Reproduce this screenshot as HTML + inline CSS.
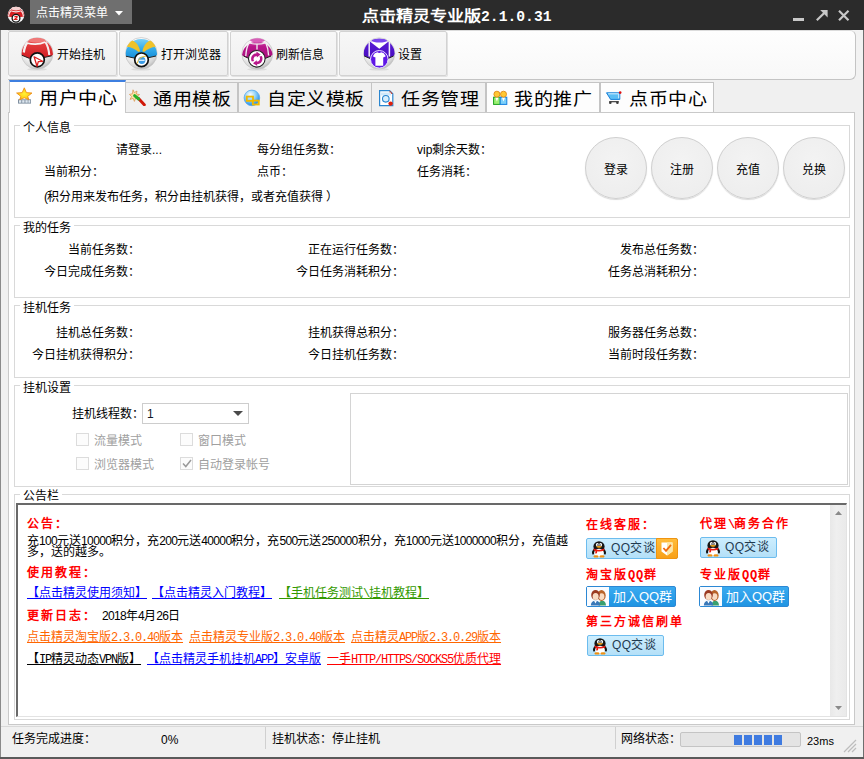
<!DOCTYPE html>
<html lang="zh-CN">
<head>
<meta charset="utf-8">
<style>
*{margin:0;padding:0;box-sizing:border-box;}
html,body{width:864px;height:759px;overflow:hidden;background:#f0f0f0;}
body{position:relative;font-family:"Liberation Sans",sans-serif;font-size:12px;color:#000;}
.a{position:absolute;white-space:nowrap;line-height:14px;}
.box{position:absolute;}
#titlebar{left:0;top:0;width:864px;height:30px;background:#2b2b2b;}
.tbtn{position:absolute;top:31px;height:45px;border:1px solid #d2d2d2;border-radius:2px;background:linear-gradient(#f7f7f7,#efefef);box-shadow:1px 1px 0 #e2e2e2;}
.tab{position:absolute;top:82px;height:30px;border:1px solid #c4c4c4;border-bottom:none;background:#f0f0f0;}
.tabt{position:absolute;font-size:19px;line-height:20px;letter-spacing:0.6px;transform:scaleY(0.92);transform-origin:0 50%;white-space:nowrap;color:#000;}
.grp{position:absolute;border:1px solid #d9d9d9;}
.gt{position:absolute;background:#fff;padding:0 3px;line-height:14px;white-space:nowrap;}
.r{text-align:right;}
.rb{position:absolute;width:62px;height:62px;border-radius:50%;border:1px solid #cfcfcf;background:radial-gradient(circle at 50% 40%,#f3f3f3,#ececec);box-shadow:0 1px 1px #d8d8d8;}
.red{color:#ff0000;font-weight:bold;}
.lnk{text-decoration:underline;}
.cb{position:absolute;width:13px;height:13px;border:1px solid #dcdcdc;background:#fcfcfc;}

.n{position:absolute;white-space:nowrap;font-size:12px;line-height:13px;}
.n s1{text-decoration:inherit;font-family:"Liberation Sans",sans-serif;font-size:12px;letter-spacing:-0.65px;}
.n m{font-family:"Liberation Mono",monospace;font-size:12px;letter-spacing:-1.2px;}
.sp{letter-spacing:2px;}
.n q{font-family:"Liberation Mono",monospace;font-size:12px;letter-spacing:0.8px;}
.n q::before,.n q::after{content:none;}
</style>
</head>
<body>
<!-- window borders -->
<div class="box" style="left:0;top:30px;width:1px;height:729px;background:#8a8a8a"></div>
<div class="box" style="left:863px;top:30px;width:1px;height:729px;background:#6e6e6e"></div>
<div class="box" style="left:0;top:757px;width:864px;height:2px;background:#5a5a5a"></div>

<!-- title bar -->
<div id="titlebar" class="box"></div>
<svg class="box" style="left:7px;top:6px" width="18" height="18" viewBox="0 0 18 18">
  <circle cx="9" cy="9" r="8.3" fill="#f6f6f6"/>
  <path d="M0.7 10.2 A8.3 8.3 0 0 1 17.3 10.2 L14 11 L9 10.6 L4 11 Z" fill="#d91e22"/>
  <ellipse cx="9" cy="2.6" rx="4.6" ry="1.9" fill="#f6d0d0"/>
  <path d="M3.6 4.8 Q9 6.8 14.4 4.8" stroke="#f4e8e8" stroke-width="1.2" fill="none"/>
  <path d="M3.6 4.8 Q1.8 7.5 1.6 10" stroke="#f4e8e8" stroke-width="1.2" fill="none"/>
  <path d="M14.4 4.8 Q16.2 7.5 16.4 10" stroke="#f4e8e8" stroke-width="1.2" fill="none"/>
  <circle cx="9" cy="12.2" r="3.9" fill="#fff" stroke="#111" stroke-width="1.3"/>
  <path d="M7.4 10.9 Q9.2 10 10.4 10.9 L7.6 13.4 H10.6" stroke="#e01818" stroke-width="1.2" fill="none"/>
</svg>
<div class="box" style="left:30px;top:0;width:102px;height:24px;background:#6f6f6f"></div>
<div class="a" style="left:36px;top:6px;color:#fff;font-size:12px">点击精灵菜单</div>
<svg class="box" style="left:115px;top:11px" width="8" height="5"><path d="M0 0 H8 L4 4.5Z" fill="#fff"/></svg>
<div class="a" style="left:362px;top:8px;color:#fff;font-size:17px;font-weight:bold;line-height:16px"><span style="display:inline-block;transform:scaleY(0.88);transform-origin:50% 60%">点击精灵专业版</span><span style="font-family:'Liberation Mono',monospace;font-size:14.7px">2.1.0.31</span></div>
<div class="box" style="left:793px;top:18px;width:10.5px;height:2.5px;background:#c8c8c8"></div>
<svg class="box" style="left:815px;top:9px" width="14" height="13" viewBox="0 0 14 13"><path d="M1.8 11.2 L9.5 3.8" stroke="#c8c8c8" stroke-width="2.2"/><path d="M5.2 1 H12.6 V8.4 Z" fill="#c8c8c8"/></svg>
<svg class="box" style="left:838px;top:10px" width="12" height="11" viewBox="0 0 12 11"><path d="M1 0.8 L10.5 10.2 M10.5 0.8 L1 10.2" stroke="#c8c8c8" stroke-width="2.2"/></svg>

<!-- toolbar -->
<div class="box" style="left:1px;top:30px;width:862px;height:50px;background:#f2f2f2"></div>
<div class="box" style="left:8px;top:30px;width:848px;height:50px;border:1px solid #c4c4c4;border-left:none;border-top-color:#dcdcdc;border-radius:0 6px 6px 0;background:linear-gradient(#fefefe,#f8f8f8)"></div>
<div class="tbtn" style="left:8px;width:109px"></div>
<div class="tbtn" style="left:119px;width:109px"></div>
<div class="tbtn" style="left:230px;width:107px"></div>
<div class="tbtn" style="left:339px;width:108px"></div>

<svg class="box" style="left:19px;top:35px" width="36" height="37" viewBox="0 0 36 37">
 <defs>
  <radialGradient id="wb" cx="40%" cy="30%" r="75%"><stop offset="0" stop-color="#ffffff"/><stop offset="0.55" stop-color="#f4f4f4"/><stop offset="0.85" stop-color="#d4d4d4"/><stop offset="1" stop-color="#b0b0b0"/></radialGradient>
  <linearGradient id="rd" x1="0" y1="0" x2="0" y2="1"><stop offset="0" stop-color="#e84848"/><stop offset="1" stop-color="#d21c22"/></linearGradient>
 </defs>
 <ellipse cx="18" cy="34.3" rx="10" ry="1.3" fill="#cfcfcf" opacity="0.6"/>
 <circle cx="18.2" cy="18.4" r="15.8" fill="url(#wb)" stroke="#c4c4c4" stroke-width="0.7"/>
 <clipPath id="clipb0"><circle cx="18.2" cy="18.4" r="15.8"/></clipPath>
 <g clip-path="url(#clipb0)">
 <path d="M2.4 19.5 A15.8 15.8 0 0 1 34 19.8 L32.7 20.8 L25.2 22.5 L18 23 L10.5 23.4 L2.7 20.2 Z" fill="url(#rd)"/>
 <ellipse cx="18" cy="5.2" rx="8.7" ry="2.5" fill="#f07a7a"/>
 <path d="M7.8 8 Q18 10.8 26.4 7" stroke="#f8f4f4" stroke-width="1.8" fill="none"/>
 <path d="M8.3 7.8 Q5.6 11 4.8 17.5" stroke="#f6f2f2" stroke-width="2.3" fill="none"/>
 <path d="M26.4 7 Q29.6 12 30.3 20" stroke="#f4ecec" stroke-width="2.1" fill="none"/>
 <path d="M2.7 20.2 L10.5 23.4 M25.2 22.5 L32.7 20.8" stroke="#222" stroke-width="1"/>
 </g>
 <circle cx="18.3" cy="24.8" r="7" fill="#fff" stroke="#111" stroke-width="1.7"/>
 <path d="M15.1 21.8 L23.6 26.3 L19.3 26.6 L18 31.3 Z" fill="none" stroke="#dd2020" stroke-width="1.3" stroke-linejoin="round"/>
</svg>
<svg class="box" style="left:123px;top:35px" width="36" height="37" viewBox="0 0 36 37">
 <defs>
  <linearGradient id="bl" x1="0" y1="0" x2="0" y2="1"><stop offset="0" stop-color="#7cd0f6"/><stop offset="0.45" stop-color="#3ab0ee"/><stop offset="1" stop-color="#168ed8"/></linearGradient>
 </defs>
 <ellipse cx="18" cy="34.3" rx="10" ry="1.3" fill="#cfcfcf" opacity="0.6"/>
 <circle cx="18.3" cy="18.3" r="15.8" fill="url(#wb)" stroke="#c4c4c4" stroke-width="0.7"/>
 <clipPath id="clipb1"><circle cx="18.3" cy="18.3" r="15.8"/></clipPath>
 <g clip-path="url(#clipb1)">
 <path d="M2.5 20 A15.8 15.8 0 0 1 34.1 19.5 L33 21 L25 22.8 L18 23 L11 23 L2.8 21.2 Z" fill="url(#bl)"/>
 <path d="M5.7 6.4 Q8 5.4 10.6 6 Q15.8 9 17.2 16.3 L15.6 17 Q10.5 12.5 3.8 11.8 Q4.3 8.5 5.7 6.4 Z" fill="#efc22a"/>
 <path d="M30.9 6.4 Q28.6 5.4 26 6 Q20.8 9 19.4 16.3 L21 17 Q26.1 12.5 32.8 11.8 Q32.3 8.5 30.9 6.4 Z" fill="#efc22a"/>
 <path d="M2.8 21.2 L11 23 M25 22.8 L33 21" stroke="#222" stroke-width="1"/>
 </g>
 <circle cx="18.5" cy="24.8" r="6.8" fill="#fff" stroke="#111" stroke-width="1.7"/>
 <circle cx="18.8" cy="25.3" r="3.6" fill="#3c9ce6"/>
 <rect x="16" y="24.7" width="5.6" height="1.1" fill="#fff"/>
 <path d="M14.2 28.5 Q15.5 21.5 22.8 21.2" stroke="#f0c030" stroke-width="1" fill="none"/>
</svg>
<svg class="box" style="left:239px;top:35px" width="36" height="37" viewBox="0 0 36 37">
 <defs>
  <linearGradient id="mg" x1="0" y1="0" x2="0" y2="1"><stop offset="0" stop-color="#d04aa8"/><stop offset="0.3" stop-color="#b8168a"/><stop offset="1" stop-color="#a80f7c"/></linearGradient>
 </defs>
 <ellipse cx="18" cy="34.3" rx="10" ry="1.3" fill="#cfcfcf" opacity="0.6"/>
 <circle cx="18.3" cy="18.7" r="15.5" fill="url(#wb)" stroke="#c4c4c4" stroke-width="0.7"/>
 <clipPath id="clipb2"><circle cx="18.3" cy="18.7" r="15.5"/></clipPath>
 <g clip-path="url(#clipb2)">
 <path d="M3 20.2 A15.5 15.5 0 0 1 33.7 19.6 L32 21 L26 23.5 L18 23 L10 23.5 L4.5 21 Z" fill="url(#mg)"/>
 <ellipse cx="18.5" cy="5" rx="7.5" ry="2.6" fill="#d860b8"/>
 <path d="M10 8 Q18 10.3 26.8 7.8" stroke="#ece4ea" stroke-width="1.3" fill="none"/>
 <path d="M18 8.8 V14.5" stroke="#ece4ea" stroke-width="1.4"/>
 <path d="M10 8 Q7.2 13 6.8 21" stroke="#f2eaf0" stroke-width="1.4" fill="none"/>
 <path d="M26.8 7.8 Q29.2 13 29.6 20.5" stroke="#f2eaf0" stroke-width="1.4" fill="none"/>
 <path d="M4.5 21 L10 23.5 M26 23.5 L32 21" stroke="#222" stroke-width="1"/>
 </g>
 <circle cx="17.8" cy="23.8" r="8.3" fill="#fff" stroke="#222" stroke-width="1.1"/>
 <path d="M12.8 26.6 A5.6 5.6 0 0 1 17.6 18.3 L17.3 16.6 L21.6 19.4 L17.8 22.4 L17.8 20.9 A3.2 3.2 0 0 0 15.2 26 Z" fill="#b8168a"/>
 <path d="M22.8 21 A5.6 5.6 0 0 1 18 29.3 L18.3 31 L14 28.2 L17.8 25.2 L17.8 26.7 A3.2 3.2 0 0 0 20.4 21.6 Z" fill="#b8168a"/>
</svg>
<svg class="box" style="left:361px;top:35px" width="36" height="37" viewBox="0 0 36 37">
 <defs>
  <linearGradient id="pp" x1="0" y1="0" x2="0" y2="1"><stop offset="0" stop-color="#5a1ed8"/><stop offset="1" stop-color="#4a0cc0"/></linearGradient>
 </defs>
 <ellipse cx="18" cy="34.3" rx="10" ry="1.3" fill="#cfcfcf" opacity="0.6"/>
 <circle cx="18.2" cy="18.4" r="15.6" fill="url(#wb)" stroke="#c4c4c4" stroke-width="0.7"/>
 <clipPath id="clipb3"><circle cx="18.2" cy="18.4" r="15.6"/></clipPath>
 <g clip-path="url(#clipb3)">
 <path d="M2.6 19.6 A15.6 15.6 0 0 1 33.8 19 L32.5 21 L27 23.5 L18 23 L9 23.5 L3.2 21 Z" fill="url(#pp)"/>
 <path d="M8.6 6.3 L27.8 6.3 L18.3 13.8 Z" fill="#ffffff"/>
 <ellipse cx="18.4" cy="5.6" rx="7.4" ry="1.9" fill="#7a44ee"/>
 <path d="M8.2 6.5 L8.2 21.5 M28.4 6.5 L28.4 21.5" stroke="#f4f0fa" stroke-width="1.5"/>
 <path d="M3.2 21 L9 23.5 M27 23.5 L32.5 21" stroke="#222" stroke-width="1"/>
 </g>
 <circle cx="18.3" cy="24.3" r="8.8" fill="#5f16e6" stroke="#e8e0ff" stroke-width="1"/>
 <path d="M13.8 18.3 L16.4 17.3 Q18.3 18.8 20.2 17.3 L22.8 18.3 L24.8 21.3 L22.4 22.5 L22.2 21.8 L22.2 30.8 L14.4 30.8 L14.4 21.8 L14.2 22.5 L11.8 21.3 Z" fill="#fff"/>
</svg>
<div class="a" style="left:57px;top:48px">开始挂机</div>
<div class="a" style="left:161px;top:48px">打开浏览器</div>
<div class="a" style="left:276px;top:48px">刷新信息</div>
<div class="a" style="left:398px;top:48px">设置</div>

<!-- tabs -->
<div class="box" style="left:8px;top:112px;width:847px;height:613px;border:1px solid #c9c9c9;background:#fff"></div>
<div class="tab" style="left:125px;width:113px"></div>
<div class="tab" style="left:238px;width:134px"></div>
<div class="tab" style="left:371px;width:115px"></div>
<div class="tab" style="left:486px;width:114px;background:#fdfdfd"></div>
<div class="tab" style="left:600px;width:114px;background:#fdfdfd"></div>
<div class="box" style="left:9px;top:80px;width:117px;height:33px;background:#fff;border-left:1px solid #c9c9c9;border-right:1px solid #c9c9c9;border-top:2px solid #3d7fe0"></div>

<svg class="box" style="left:16px;top:87px" width="17" height="17" viewBox="0 0 17 17">
 <defs><radialGradient id="st" cx="50%" cy="50%" r="55%"><stop offset="0" stop-color="#fff23a"/><stop offset="0.6" stop-color="#ffd21a"/><stop offset="1" stop-color="#f08a10"/></radialGradient></defs>
 <rect x="2" y="12.3" width="13" height="4.3" fill="#7f8fa0"/>
 <rect x="3" y="13.2" width="2.3" height="2.5" fill="#dfe8f0"/><rect x="6.2" y="13.2" width="2.3" height="2.5" fill="#dfe8f0"/><rect x="9.4" y="13.2" width="2.3" height="2.5" fill="#dfe8f0"/><rect x="12.4" y="13.2" width="1.8" height="2.5" fill="#dfe8f0"/>
 <path d="M8.3 0.8 L10.4 5.6 L16 6 L11.7 9.4 L13 12.8 L8.3 10.8 L3.6 12.8 L4.9 9.4 L0.6 6 L6.2 5.6 Z" fill="url(#st)" stroke="#ec8a12" stroke-width="0.8" stroke-linejoin="round"/>
</svg>
<svg class="box" style="left:129px;top:89px" width="17" height="17" viewBox="0 0 17 17">
 <path d="M4 0.8 L5.3 3.6 L8 2 L7.4 5 L10.6 5.6 L8 7.4 L9.6 10 L6.6 9.2 L5.4 12.4 L4.2 9.4 L1 10.4 L2.6 7.6 L0.4 5.4 L3.4 4.8 Z" fill="#fbe3a8" stroke="#d9904a" stroke-width="0.7"/>
 <path d="M9.3 9.3 L15.3 15.8" stroke="#d01808" stroke-width="3" stroke-linecap="round"/>
 <path d="M5.6 6.6 L9.6 10" stroke="#28b028" stroke-width="3" stroke-linecap="round"/>
</svg>
<svg class="box" style="left:243px;top:89px" width="18" height="18" viewBox="0 0 18 18">
 <defs><radialGradient id="gl" cx="40%" cy="30%" r="70%"><stop offset="0" stop-color="#ffffff"/><stop offset="0.5" stop-color="#8fd0f8"/><stop offset="1" stop-color="#1f8ae6"/></radialGradient></defs>
 <circle cx="8.9" cy="8.9" r="7.8" fill="url(#gl)" stroke="#5aa8ee" stroke-width="0.8"/>
 <rect x="3.8" y="7.6" width="6.2" height="4.3" fill="none" stroke="#f0b800" stroke-width="1.8"/>
 <rect x="9.8" y="11.6" width="6" height="3.9" fill="none" stroke="#f0b800" stroke-width="1.8"/>
</svg>
<svg class="box" style="left:378px;top:89px" width="17" height="18" viewBox="0 0 17 18">
 <path d="M1.6 1.6 H11.6 L14.8 4.8 V16.6 H1.6 Z" fill="#fff" stroke="#2a86d0" stroke-width="1.2"/>
 <path d="M11.6 1.6 L14.8 4.8 H11.6 Z" fill="#e03010"/>
 <rect x="3" y="3.5" width="10" height="3" fill="#cfe8fa"/>
 <circle cx="7.8" cy="9.8" r="3.3" fill="#d8eefc" stroke="#2a86d0" stroke-width="1.1"/>
 <circle cx="12.6" cy="14.6" r="2.2" fill="#e0200c"/>
</svg>
<svg class="box" style="left:491px;top:89px" width="18" height="17" viewBox="0 0 18 17">
 <rect x="2.6" y="8.2" width="6.6" height="7.2" fill="#9af070" stroke="#1aa01a" stroke-width="1"/>
 <rect x="9.2" y="8.2" width="6.6" height="7.2" fill="#7cd0fa" stroke="#1480e0" stroke-width="1"/>
 <path d="M4.3 8.4 L5.9 12.6 L7.5 8.4 Z M10.9 8.4 L12.5 12.6 L14.1 8.4 Z" fill="#fff"/>
 <circle cx="5.9" cy="5.2" r="3" fill="#ffc833" stroke="#e08a18" stroke-width="0.9"/>
 <circle cx="12.5" cy="5.2" r="3" fill="#ffc833" stroke="#e08a18" stroke-width="0.9"/>
</svg>
<svg class="box" style="left:605px;top:91px" width="17" height="14" viewBox="0 0 17 14">
 <path d="M1.5 1.8 H14.8 V8.4 H5.6 Z" fill="#5cbef4" stroke="#1a80d8" stroke-width="1"/>
 <path d="M3.2 2.8 H13.7 V7.3" fill="none" stroke="#e6f6ff" stroke-width="0.9"/>
 <rect x="4.2" y="10" width="9.6" height="1.3" fill="#4a4a4a"/>
 <circle cx="5.3" cy="11.8" r="1.3" fill="#3a3a3a"/><circle cx="12.4" cy="11.8" r="1.3" fill="#3a3a3a"/>
 <circle cx="15.2" cy="1.6" r="1.3" fill="#e01010"/>
</svg>

<div class="tabt" style="left:39px;top:88px">用户中心</div>
<div class="tabt" style="left:153px;top:89px">通用模板</div>
<div class="tabt" style="left:267px;top:89px">自定义模板</div>
<div class="tabt" style="left:401px;top:89px">任务管理</div>
<div class="tabt" style="left:514px;top:89px">我的推广</div>
<div class="tabt" style="left:629px;top:89px">点币中心</div>


<!-- G1 personal info -->
<div class="grp" style="left:14px;top:125px;width:836px;height:93px"></div>
<div class="gt" style="left:20px;top:121px">个人信息</div>
<div class="a" style="left:116px;top:143px">请登录...</div>
<div class="a" style="left:257px;top:143px">每分组任务数：</div>
<div class="a" style="left:417px;top:143px">vip剩余天数：</div>
<div class="a" style="left:44px;top:165px">当前积分：</div>
<div class="a" style="left:257px;top:165px">点币：</div>
<div class="a" style="left:417px;top:165px">任务消耗：</div>
<div class="a" style="left:44px;top:189.5px">(<span style="margin-left:-1px">积分用来发布任务，积分由挂机获得，或者充值获得<span style="margin-left:2.5px">）</span></span></div>
<div class="rb" style="left:585px;top:137px"></div>
<div class="rb" style="left:651px;top:137px"></div>
<div class="rb" style="left:717px;top:137px"></div>
<div class="rb" style="left:783px;top:137px"></div>
<div class="a" style="left:604px;top:163px">登录</div>
<div class="a" style="left:670px;top:163px">注册</div>
<div class="a" style="left:736px;top:163px">充值</div>
<div class="a" style="left:802px;top:163px">兑换</div>

<!-- G2 my tasks -->
<div class="grp" style="left:14px;top:225px;width:836px;height:73px"></div>
<div class="gt" style="left:20px;top:221px">我的任务</div>
<div class="a r" style="right:724px;top:243px">当前任务数：</div>
<div class="a r" style="right:724px;top:265px">今日完成任务数：</div>
<div class="a r" style="right:460px;top:243px">正在运行任务数：</div>
<div class="a r" style="right:460px;top:265px">今日任务消耗积分：</div>
<div class="a r" style="right:160px;top:243px">发布总任务数：</div>
<div class="a r" style="right:160px;top:265px">任务总消耗积分：</div>

<!-- G3 hang tasks -->
<div class="grp" style="left:14px;top:305px;width:836px;height:73px"></div>
<div class="gt" style="left:20px;top:301px">挂机任务</div>
<div class="a r" style="right:724px;top:326px">挂机总任务数：</div>
<div class="a r" style="right:724px;top:348px">今日挂机获得积分：</div>
<div class="a r" style="right:460px;top:326px">挂机获得总积分：</div>
<div class="a r" style="right:460px;top:348px">今日挂机任务数：</div>
<div class="a r" style="right:160px;top:326px">服务器任务总数：</div>
<div class="a r" style="right:160px;top:348px">当前时段任务数：</div>

<!-- G4 settings -->
<div class="grp" style="left:14px;top:385px;width:836px;height:102px"></div>
<div class="gt" style="left:20px;top:381px">挂机设置</div>
<div class="a" style="left:72px;top:407px">挂机线程数：</div>
<div class="box" style="left:142px;top:403px;width:107px;height:21px;border:1px solid #cdcdcd;background:#fff"></div>
<div class="a" style="left:147px;top:407px;font-size:12px;color:#101828">1</div>
<svg class="box" style="left:233px;top:410.5px" width="10" height="5"><path d="M0 0 H10 L5 5Z" fill="#4a4a4a"/></svg>
<div class="cb" style="left:76px;top:433px"></div>
<div class="a" style="left:94px;top:433.5px;color:#a0a0a0">流量模式</div>
<div class="cb" style="left:180px;top:433px"></div>
<div class="a" style="left:198px;top:433.5px;color:#a0a0a0">窗口模式</div>
<div class="cb" style="left:76px;top:457px"></div>
<div class="a" style="left:94px;top:457.5px;color:#a0a0a0">浏览器模式</div>
<div class="cb" style="left:180px;top:457px"></div>
<svg class="box" style="left:182px;top:459px" width="10" height="9"><path d="M1 4.5 L3.8 7.5 L9 1" stroke="#9a9a9a" stroke-width="1.5" fill="none"/></svg>
<div class="a" style="left:198px;top:457.5px;color:#a0a0a0">自动登录帐号</div>
<div class="box" style="left:350px;top:393px;width:498px;height:92px;border:1px solid #d4d4d4;background:#fff"></div>

<!-- G5 notice -->
<div class="grp" style="left:14px;top:494px;width:836px;height:226px"></div>
<div class="gt" style="left:20px;top:489px">公告栏</div>


<!-- rich edit -->
<div class="box" style="left:16px;top:503px;width:831px;height:214px;border-top:2px solid #696969;border-left:2px solid #696969;border-right:1px solid #e3e3e3;border-bottom:1px solid #e3e3e3;background:#fff"></div>
<div class="box" style="left:830px;top:505px;width:16px;height:211px;background:linear-gradient(90deg,#e8e8e8,#efefef 40%,#eaeaea)"></div>
<svg class="box" style="left:835px;top:511px" width="7" height="4"><path d="M0 4 L3.5 0 L7 4Z" fill="#8a8a8a"/></svg>
<svg class="box" style="left:835px;top:706px" width="7" height="4"><path d="M0 0 L3.5 4 L7 0Z" fill="#8a8a8a"/></svg>
<div class="n red sp" style="left:27px;top:518px">公告：</div>
<div class="n" style="left:27px;top:535px">充<s1>100</s1>元送<s1>10000</s1>积分，充<s1>200</s1>元送<s1>40000</s1>积分，充<s1>500</s1>元送<s1>250000</s1>积分，充<s1>1000</s1>元送<s1>1000000</s1>积分，充值越</div>
<div class="n" style="left:27px;top:546px">多，送的越多。</div>
<div class="n red sp" style="left:27px;top:567px">使用教程：</div>
<div class="n lnk" style="left:27px;top:587px;color:#0000ff">【点击精灵使用须知】</div>
<div class="n lnk" style="left:152px;top:587px;color:#0000ff">【点击精灵入门教程】</div>
<div class="n lnk" style="left:279px;top:587px;color:#339900">【手机任务测试<m>\</m>挂机教程】</div>
<div class="n red sp" style="left:27px;top:610px">更新日志：</div>
<div class="n" style="left:102px;top:609.5px"><s1>2018</s1>年<s1>4</s1>月<s1>26</s1>日</div>
<div class="n lnk" style="left:27px;top:630.5px;color:#ff6600">点击精灵淘宝版<m>2.3.0.40</m>版本</div>
<div class="n lnk" style="left:189px;top:630.5px;color:#ff6600">点击精灵专业版<m>2.3.0.40</m>版本</div>
<div class="n lnk" style="left:351px;top:630.5px;color:#ff6600">点击精灵<m>APP</m>版<m>2.3.0.29</m>版本</div>
<div class="n lnk" style="left:27px;top:653px;color:#000">【<m>IP</m>精灵动态<m>VPN</m>版】</div>
<div class="n lnk" style="left:147px;top:653px;color:#0000ff">【点击精灵手机挂机<m>APP</m>】安卓版</div>
<div class="n lnk" style="left:327px;top:653px;color:#ff0000">一手<m>HTTP/HTTPS/SOCKS5</m>优质代理</div>

<div class="n red sp" style="left:586px;top:518.5px">在线客服：</div>
<div class="n red sp" style="left:700px;top:518px">代理<m>\</m>商务合作</div>
<div class="n red sp" style="left:586px;top:569px">淘宝版<q>QQ</q>群</div>
<div class="n red sp" style="left:700px;top:569px">专业版<q>QQ</q>群</div>
<div class="n red sp" style="left:586px;top:616px">第三方诚信刷单</div>
<div class="box" style="left:586px;top:538px;width:92px;height:21px;border:1px solid #6cbcee;border-radius:2px;background:linear-gradient(#cdeefe,#b4e0f8)"></div>
<div class="box" style="left:656px;top:538px;width:22px;height:21px;border:1px solid #f09410;border-radius:0 2px 2px 0;background:linear-gradient(#ffbc3a,#f8a018)"></div>
<svg class="box" style="left:661px;top:542px" width="12" height="14" viewBox="0 0 12 14">
 <path d="M0.5 0.5 H11.5 V9.5 L6 13.5 L0.5 9.5 Z" fill="#fff"/>
 <path d="M6 0.5 H11.5 V9.5 L6 13.5 Z" fill="#fbe7a8"/>
 <path d="M2.4 6 L5 8.8 L10 2.8" stroke="#f06a10" stroke-width="1.8" fill="none"/>
</svg>
<svg class="box" style="left:591px;top:541px" width="16" height="17" viewBox="0 0 16 17">
 <ellipse cx="2.6" cy="10.8" rx="1.4" ry="3" fill="#111" transform="rotate(20 2.6 10.8)"/>
 <ellipse cx="13.4" cy="10.8" rx="1.4" ry="3" fill="#111" transform="rotate(-20 13.4 10.8)"/>
 <ellipse cx="8" cy="5.6" rx="5.6" ry="5.4" fill="#161616"/>
 <ellipse cx="8" cy="11.8" rx="4.8" ry="4" fill="#fff"/>
 <ellipse cx="6.4" cy="3.8" rx="1.5" ry="1.8" fill="#fff"/><ellipse cx="9.6" cy="3.8" rx="1.5" ry="1.8" fill="#fff"/>
 <circle cx="6.9" cy="4" r="0.7" fill="#111"/><circle cx="9.1" cy="4" r="0.7" fill="#111"/>
 <path d="M2.6 7.6 Q8 10.2 13.4 7.6 L13.2 9.6 Q8 11.6 2.8 9.6 Z" fill="#ee1a10"/>
 <path d="M4.5 9.3 L4.2 12.5 L6 12.3 L6.2 9.8 Z" fill="#e81a10"/>
 <path d="M4.8 5.8 Q8 4.4 11.2 5.8 Q8 7.8 4.8 5.8 Z" fill="#ffaa10"/>
 <ellipse cx="5" cy="15.4" rx="2.6" ry="1.2" fill="#f09010"/><ellipse cx="11" cy="15.4" rx="2.6" ry="1.2" fill="#f09010"/>
</svg>
<div class="a" style="left:609px;top:541px;font-size:12px;line-height:15px;letter-spacing:0.4px;color:#1f3a50;margin-left:2px">QQ交谈</div>
<div class="box" style="left:700px;top:537px;width:77px;height:21px;border:1px solid #6cbcee;border-radius:2px;background:linear-gradient(#cdeefe,#b4e0f8)"></div>
<svg class="box" style="left:705px;top:540px" width="16" height="17" viewBox="0 0 16 17">
 <ellipse cx="2.6" cy="10.8" rx="1.4" ry="3" fill="#111" transform="rotate(20 2.6 10.8)"/>
 <ellipse cx="13.4" cy="10.8" rx="1.4" ry="3" fill="#111" transform="rotate(-20 13.4 10.8)"/>
 <ellipse cx="8" cy="5.6" rx="5.6" ry="5.4" fill="#161616"/>
 <ellipse cx="8" cy="11.8" rx="4.8" ry="4" fill="#fff"/>
 <ellipse cx="6.4" cy="3.8" rx="1.5" ry="1.8" fill="#fff"/><ellipse cx="9.6" cy="3.8" rx="1.5" ry="1.8" fill="#fff"/>
 <circle cx="6.9" cy="4" r="0.7" fill="#111"/><circle cx="9.1" cy="4" r="0.7" fill="#111"/>
 <path d="M2.6 7.6 Q8 10.2 13.4 7.6 L13.2 9.6 Q8 11.6 2.8 9.6 Z" fill="#ee1a10"/>
 <path d="M4.5 9.3 L4.2 12.5 L6 12.3 L6.2 9.8 Z" fill="#e81a10"/>
 <path d="M4.8 5.8 Q8 4.4 11.2 5.8 Q8 7.8 4.8 5.8 Z" fill="#ffaa10"/>
 <ellipse cx="5" cy="15.4" rx="2.6" ry="1.2" fill="#f09010"/><ellipse cx="11" cy="15.4" rx="2.6" ry="1.2" fill="#f09010"/>
</svg>
<div class="a" style="left:723px;top:540px;font-size:12px;line-height:15px;letter-spacing:0.4px;color:#1f3a50;margin-left:2px">QQ交谈</div>
<div class="box" style="left:586px;top:586px;width:90px;height:21px;border:1px solid #2c88d4;border-radius:2px;background:linear-gradient(#3aaaf0,#1f94e2)"></div>
<div class="box" style="left:587px;top:587px;width:22px;height:19px;background:#fafcff"></div>
<svg class="box" style="left:590px;top:589px" width="17" height="17" viewBox="0 0 17 17">
 <path d="M8.5 16.5 Q8.8 12 12.2 11.8 Q15.8 12 16 16.5 Z" fill="#3aa070"/>
 <ellipse cx="11.5" cy="6.5" rx="4.2" ry="5.4" fill="#b8642a"/>
 <ellipse cx="11.6" cy="7.6" rx="2.8" ry="3.4" fill="#f8dcc4"/>
 <path d="M0.8 16.5 Q1 12 5.5 11.8 Q10 12 10.2 16.5 Z" fill="#3a78b8"/>
 <path d="M4.2 12 L5.5 14.5 L6.8 12 Z" fill="#fff"/>
 <ellipse cx="5.5" cy="6" rx="4.3" ry="5" fill="#9a3a22"/>
 <ellipse cx="5.6" cy="7.6" rx="3" ry="3.5" fill="#f8dcc4"/>
</svg>
<div class="a" style="left:613px;top:589px;font-size:13px;line-height:15px;color:#fff">加入QQ群</div>
<div class="box" style="left:699px;top:586px;width:90px;height:21px;border:1px solid #2c88d4;border-radius:2px;background:linear-gradient(#3aaaf0,#1f94e2)"></div>
<div class="box" style="left:700px;top:587px;width:22px;height:19px;background:#fafcff"></div>
<svg class="box" style="left:703px;top:589px" width="17" height="17" viewBox="0 0 17 17">
 <path d="M8.5 16.5 Q8.8 12 12.2 11.8 Q15.8 12 16 16.5 Z" fill="#3aa070"/>
 <ellipse cx="11.5" cy="6.5" rx="4.2" ry="5.4" fill="#b8642a"/>
 <ellipse cx="11.6" cy="7.6" rx="2.8" ry="3.4" fill="#f8dcc4"/>
 <path d="M0.8 16.5 Q1 12 5.5 11.8 Q10 12 10.2 16.5 Z" fill="#3a78b8"/>
 <path d="M4.2 12 L5.5 14.5 L6.8 12 Z" fill="#fff"/>
 <ellipse cx="5.5" cy="6" rx="4.3" ry="5" fill="#9a3a22"/>
 <ellipse cx="5.6" cy="7.6" rx="3" ry="3.5" fill="#f8dcc4"/>
</svg>
<div class="a" style="left:726px;top:589px;font-size:13px;line-height:15px;color:#fff">加入QQ群</div>
<div class="box" style="left:587px;top:635px;width:77px;height:21px;border:1px solid #6cbcee;border-radius:2px;background:linear-gradient(#cdeefe,#b4e0f8)"></div>
<svg class="box" style="left:592px;top:638px" width="16" height="17" viewBox="0 0 16 17">
 <ellipse cx="2.6" cy="10.8" rx="1.4" ry="3" fill="#111" transform="rotate(20 2.6 10.8)"/>
 <ellipse cx="13.4" cy="10.8" rx="1.4" ry="3" fill="#111" transform="rotate(-20 13.4 10.8)"/>
 <ellipse cx="8" cy="5.6" rx="5.6" ry="5.4" fill="#161616"/>
 <ellipse cx="8" cy="11.8" rx="4.8" ry="4" fill="#fff"/>
 <ellipse cx="6.4" cy="3.8" rx="1.5" ry="1.8" fill="#fff"/><ellipse cx="9.6" cy="3.8" rx="1.5" ry="1.8" fill="#fff"/>
 <circle cx="6.9" cy="4" r="0.7" fill="#111"/><circle cx="9.1" cy="4" r="0.7" fill="#111"/>
 <path d="M2.6 7.6 Q8 10.2 13.4 7.6 L13.2 9.6 Q8 11.6 2.8 9.6 Z" fill="#ee1a10"/>
 <path d="M4.5 9.3 L4.2 12.5 L6 12.3 L6.2 9.8 Z" fill="#e81a10"/>
 <path d="M4.8 5.8 Q8 4.4 11.2 5.8 Q8 7.8 4.8 5.8 Z" fill="#ffaa10"/>
 <ellipse cx="5" cy="15.4" rx="2.6" ry="1.2" fill="#f09010"/><ellipse cx="11" cy="15.4" rx="2.6" ry="1.2" fill="#f09010"/>
</svg>
<div class="a" style="left:610px;top:638px;font-size:12px;line-height:15px;letter-spacing:0.4px;color:#1f3a50;margin-left:2px">QQ交谈</div>



<!-- status bar -->
<div class="box" style="left:1px;top:726px;width:862px;height:1px;background:#d9d9d9"></div>
<div class="a" style="left:12px;top:732px">任务完成进度：</div>
<div class="a" style="left:161px;top:733px;font-size:12px">0%</div>
<div class="box" style="left:265px;top:727px;width:1px;height:22px;background:#d0d0d0"></div>
<div class="a" style="left:272px;top:732px">挂机状态：停止挂机</div>
<div class="box" style="left:615px;top:727px;width:1px;height:22px;background:#d0d0d0"></div>
<div class="a" style="left:621px;top:732px">网络状态：</div>
<div class="box" style="left:680px;top:732px;width:121px;height:15px;border:1px solid #c4c4c4;border-radius:2px;background:#e4e4e4"></div>
<div class="box" style="left:734px;top:735px;width:8px;height:10px;background:#3f7be0"></div>
<div class="box" style="left:744px;top:735px;width:8px;height:10px;background:#3f7be0"></div>
<div class="box" style="left:754px;top:735px;width:8px;height:10px;background:#3f7be0"></div>
<div class="box" style="left:764px;top:735px;width:8px;height:10px;background:#3f7be0"></div>
<div class="box" style="left:774px;top:735px;width:8px;height:10px;background:#3f7be0"></div>
<div class="a" style="left:807px;top:734px;font-size:11px">23ms</div>
<svg class="box" style="left:842px;top:738px" width="15" height="15"><path d="M14 2 L2 14 M14 6 L6 14 M14 10 L10 14" stroke="#bdbdbd" stroke-width="1.2"/></svg>

</body>
</html>
